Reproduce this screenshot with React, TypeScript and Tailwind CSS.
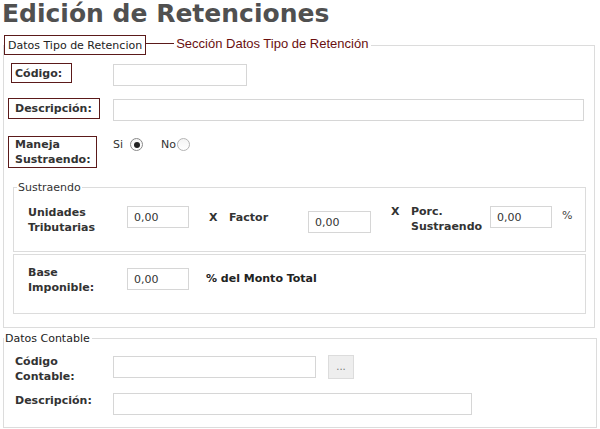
import type { ReactNode } from 'react';

function Field({ className, value = '' }: { className: string; value?: string }) {
  return (
    <input
      readOnly
      value={value}
      className={`h-[22px] border border-[#d6d6d6] bg-white pl-[6px] text-[11px] text-[#333] outline-none ${className}`}
    />
  );
}

function Radio({ checked }: { checked?: boolean }) {
  return (
    <span
      className={`flex h-[13px] w-[13px] items-center justify-center rounded-full border bg-gradient-to-b from-[#f4f4f4] to-white ${checked ? 'border-[#8a8a8a]' : 'border-[#b4b4b4]'}`}
    >
      {checked && <span className="h-[6px] w-[6px] rounded-full bg-[#222]" />}
    </span>
  );
}

function Mark({ children, className }: { children: ReactNode; className: string }) {
  return <div className={`flex border border-[#5b1a1a] font-bold ${className}`}>{children}</div>;
}

export default function App() {
  return (
    <div className="h-[429px] w-[600px] overflow-hidden bg-white font-['DejaVu_Sans',sans-serif] text-[11px] leading-[15px] text-[#333]">
      <h1 className="pl-[2px] text-[25px] font-bold leading-[28px] text-[#505050]">Edición de Retenciones</h1>

      <fieldset className="ml-[3px] mt-[6px] w-[592px] border border-[#dcdcdc] pb-[13px]">
        <legend className="flex items-center">
          <span className="flex h-[20px] items-center border border-[#5b1a1a] px-[3px] text-[#222]">Datos Tipo de Retencion</span>
          <span className="mb-[3px] h-px w-[28px] bg-[#5b1a1a]" />
          <span className="mb-[2px] pl-[2px] pr-[3px] font-['Liberation_Sans',sans-serif] text-[13px] leading-[20px] text-[#6a1010]">
            Sección Datos Tipo de Retención
          </span>
        </legend>

        <div className="mt-[7px] flex items-start">
          <div className="w-[109px]">
            <Mark className="ml-[7px] h-[20px] w-fit items-center pl-[3px] pr-[9px]">Código:</Mark>
          </div>
          <Field className="mt-[1px] w-[134px]" />
        </div>

        <div className="mt-[12px] flex items-start">
          <div className="w-[109px]">
            <Mark className="ml-[4px] h-[21px] w-[92px] items-center pl-[6px]">Descripción:</Mark>
          </div>
          <Field className="mt-[1px] w-[471px]" />
        </div>

        <div className="mt-[15px] flex items-start">
          <div className="w-[109px]">
            <Mark className="ml-[4px] h-[32px] w-[89px] flex-col pl-[6px]">
              <span>Maneja</span>
              <span>Sustraendo:</span>
            </Mark>
          </div>
          <div className="mt-[1px] flex items-center">
            <span>Si</span>
            <span className="ml-[7px]"><Radio checked /></span>
            <span className="ml-[18px]">No</span>
            <span className="ml-[1px]"><Radio /></span>
          </div>
        </div>

        <fieldset className="ml-[9px] mt-[13px] w-[573px] border border-[#dcdcdc]">
          <legend className="ml-[3px] px-[1px] leading-[13px]">Sustraendo</legend>
          <div className="flex items-start pb-[16px] pl-[14px] pt-[12px]">
            <div className="-mt-[1px] w-[99px] font-bold">
              Unidades
              <br />
              Tributarias
            </div>
            <Field className="w-[62px]" value="0,00" />
            <div className="ml-[20px] mt-[4px] flex w-[99px] font-bold">
              <span className="w-[20px]">X</span>
              <span>Factor</span>
            </div>
            <Field className="mt-[5px] w-[63px]" value="0,00" />
            <div className="-mt-[2px] ml-[20px] flex w-[99px] font-bold">
              <span className="w-[20px]">X</span>
              <span>
                Porc.
                <br />
                Sustraendo
              </span>
            </div>
            <Field className="w-[62px]" value="0,00" />
            <span className="ml-[10px] mt-[2px] text-[#444]">%</span>
          </div>
        </fieldset>

        <div className="ml-[9px] mt-[2px] w-[573px] border border-[#dcdcdc]">
          <div className="flex items-start pb-[18px] pl-[14px] pt-[10px]">
            <div className="w-[99px] font-bold">
              Base
              <br />
              Imponible:
            </div>
            <Field className="mt-[3px] w-[62px]" value="0,00" />
            <span className="ml-[17px] mt-[6px] font-bold text-[#222]">% del Monto Total</span>
          </div>
        </div>
      </fieldset>

      <fieldset className="ml-[3px] mt-[4px] w-[594px] border border-[#dcdcdc] pb-[12px]">
        <legend className="pl-[1px] pr-[2px] leading-[13px] text-[#222]">Datos Contable</legend>
        <div className="mt-[9px] flex items-start">
          <div className="w-[109px] pl-[11px] font-bold">
            Código
            <br />
            Contable:
          </div>
          <Field className="mt-[2px] w-[203px]" />
          <button className="ml-[12px] mt-[1px] flex h-[24px] w-[26px] items-center justify-center border border-[#dcdcdc] bg-[#eeeeee] pb-[2px] text-[10px] text-[#777]">
            ...
          </button>
        </div>
        <div className="mt-[8px] flex items-start">
          <div className="mt-[1px] w-[109px] pl-[11px] font-bold">Descripción:</div>
          <Field className="mt-[1px] w-[359px]" />
        </div>
      </fieldset>
    </div>
  );
}
